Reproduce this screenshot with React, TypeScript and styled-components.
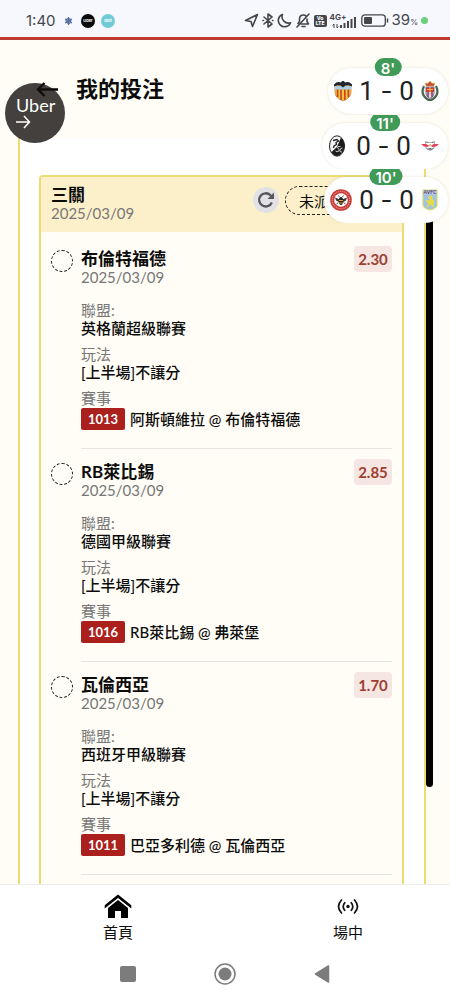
import React from "react";
import styled, { createGlobalStyle } from "styled-components";

const sans = `Lato, "Noto Sans CJK TC", sans-serif`;

const GlobalStyle = createGlobalStyle`
  *, *::before, *::after { box-sizing: border-box; }
  body { margin: 0; background: #fffdf5; font-family: ${sans}; color: #0c0c0c; }
  button { font: inherit; color: inherit; background: none; border: 0; padding: 0; cursor: pointer; }
  h1, h2, h3, p, dl, dt, dd, ul { margin: 0; padding: 0; font-weight: inherit; }
`;

const Screen = styled.div`
  position: relative;
  display: flex;
  flex-direction: column;
  height: 100vh;
  overflow: hidden;
`;

/* ---------- status bar ---------- */

const StatusBar = styled.header`
  display: flex;
  flex: none;
  align-items: center;
  justify-content: space-between;
  height: 40px;
  padding: 4px 22px 0 26px;
  background: #f7f8fd;
  border-bottom: 3px solid #bf3b31;
  color: #45464c;
  font-family: Inter, sans-serif;
`;

const StatusGroup = styled.div<{ $gap: number }>`
  display: flex;
  align-items: center;
  gap: ${(p) => p.$gap}px;
`;

const Clock = styled.time`
  width: 30px;
  font-size: 15px;
  line-height: 20px;
`;

const AppDot = styled.span<{ $color: string }>`
  display: grid;
  place-items: center;
  width: 14px;
  height: 14px;
  border-radius: 50%;
  background: ${(p) => p.$color};
  color: #fff;
  font-size: 4px;
  font-weight: 700;
  line-height: 4px;
`;

const Volte = styled.span`
  display: grid;
  place-items: center;
  width: 13px;
  height: 12px;
  border-radius: 2px;
  background: #45464c;
  color: #fff;
  font-size: 5px;
  font-weight: 800;
  line-height: 5px;
  text-align: center;
`;

const Network = styled.span`
  position: relative;
  width: 28px;
  height: 16px;
`;

const NetworkType = styled.span`
  position: absolute;
  left: 0;
  top: 0;
  font-size: 8px;
  font-weight: 700;
  line-height: 8px;
`;

const Percent = styled.span`
  font-size: 15px;
  line-height: 20px;
  small { font-size: 8px; }
`;

const ActiveDot = styled.span`
  width: 7px;
  height: 7px;
  border-radius: 50%;
  background: #68d07c;
`;

/* ---------- page ---------- */

const TitleBar = styled.div`
  display: flex;
  flex: none;
  align-items: center;
  gap: 16px;
  height: 98px;
  padding: 0 36px;
`;

const BackButton = styled.button`
  display: flex;
  width: 24px;
  height: 24px;
  align-items: center;
`;

const PageTitle = styled.h1`
  font-size: 22px;
  font-weight: 700;
  line-height: 30px;
`;

const Panel = styled.main`
  position: relative;
  display: flex;
  flex: 1;
  min-height: 0;
  margin: 0 24px 0 18px;
  padding: 37px 20px 0 19px;
  background: #fff;
  border: solid #ecdc72;
  border-width: 0 2px;
`;

const ScrollThumb = styled.div`
  position: absolute;
  top: 60px;
  right: -9px;
  bottom: 97px;
  width: 7px;
  border-radius: 4px;
  background: #000;
`;

const Card = styled.section`
  flex: 1;
  overflow: hidden;
  background: #fffdf5;
  border: 2px solid #ecdc72;
  border-bottom: 0;
  border-radius: 4px 4px 0 0;
`;

const CardHead = styled.div`
  display: flex;
  align-items: flex-start;
  padding: 9px 10px 10px;
  background: #fcf0cb;
`;

const CardTitle = styled.div`
  flex: 1;
`;

const Name = styled.h2`
  font-size: 17px;
  font-weight: 700;
  line-height: 18px;
`;

const DateText = styled.p`
  color: #777;
  font-size: 15px;
  line-height: 18px;
`;

const RefreshButton = styled.button`
  display: grid;
  place-items: center;
  flex: none;
  width: 26px;
  height: 26px;
  margin: 1px 6px 0;
  border-radius: 50%;
  background: #e2e1e4;
`;

const StatusPill = styled.button`
  flex: none;
  width: 107px;
  height: 29px;
  padding-left: 13px;
  border: 1px dashed #222;
  border-radius: 15px;
  font-size: 15px;
  line-height: 20px;
  text-align: left;
`;

const BetList = styled.ul`
  padding: 4px 10px 0;
  list-style: none;
`;

const BetItem = styled.li`
  display: flex;
  align-items: flex-start;
  gap: 8px;
`;

const Marker = styled.input`
  appearance: none;
  flex: none;
  width: 22px;
  height: 22px;
  margin: 14px 0 0;
  border: 1px dashed #222;
  border-radius: 50%;
`;

const BetBody = styled.div`
  flex: 1;
  padding: 10px 0 18px;
  border-bottom: 1px solid #e9e3dc;
`;

const BetHead = styled.div`
  display: flex;
  align-items: flex-start;
  justify-content: space-between;
`;

const BetTitle = styled.div`
  padding: 4px 0 0;
`;

const Odds = styled.span`
  width: 38px;
  border-radius: 4px;
  background: #f6e6e1;
  color: #9c4034;
  font-size: 15px;
  font-weight: 700;
  line-height: 26px;
  text-align: center;
`;

const Fields = styled.dl`
  display: grid;
  gap: 8px;
  margin-top: 15px;
  font-size: 15px;
  line-height: 18px;
  dt { color: #777; }
  dd { font-weight: 500; }
`;

const Match = styled.dd`
  display: flex;
  align-items: center;
  gap: 5px;
  padding-top: 1px;
  line-height: 22px;
  white-space: nowrap;
`;

const MatchNo = styled.span`
  width: 44px;
  border-radius: 2px;
  background: #ab1f1c;
  color: #fff;
  font-size: 13px;
  font-weight: 700;
  text-align: center;
`;

/* ---------- bottom bars ---------- */

const TabBar = styled.nav`
  position: relative;
  display: flex;
  flex: none;
  justify-content: space-between;
  height: 66px;
  padding: 8px 86px 0 102px;
  background: #fff;
  border-top: 1px solid #ececec;
`;

const Tab = styled.button`
  display: flex;
  flex-direction: column;
  align-items: center;
  gap: 3px;
  width: 32px;
  font-size: 15px;
  line-height: 20px;
  white-space: nowrap;
`;

const SystemBar = styled.nav`
  display: flex;
  flex: none;
  align-items: center;
  justify-content: center;
  gap: 78px;
  height: 50px;
  padding-bottom: 2px;
  background: #fff;
  button { display: flex; }
`;

/* ---------- floating overlays ---------- */

const Bubble = styled.button`
  position: absolute;
  top: 83px;
  left: 5px;
  width: 60px;
  height: 60px;
  padding: 0 0 2px 11px;
  border-radius: 50%;
  background: rgba(20, 16, 16, 0.8);
  color: #fff;
  font-size: 18px;
  line-height: 20px;
  text-align: left;
  svg { display: block; }
`;

const Scores = styled.aside`
  position: absolute;
  top: 58px;
  right: 0;
  display: flex;
  flex-direction: column;
  align-items: flex-end;
`;

const ScoreWidget = styled.div<{ $width: number; $first?: boolean }>`
  position: relative;
  width: ${(p) => p.$width}px;
  height: ${(p) => (p.$first ? 57 : 54)}px;
  padding-top: ${(p) => (p.$first ? 10 : 8)}px;
  overflow: hidden;
`;

const ScorePill = styled.div`
  display: flex;
  align-items: center;
  justify-content: space-between;
  height: 46px;
  margin: 0 2px;
  padding: 0 9px 0 6px;
  border-radius: 23px;
  background: #fff;
  box-shadow: 0 0 3px rgba(90, 80, 40, 0.16);
`;

const Minute = styled.span<{ $first?: boolean }>`
  position: absolute;
  top: ${(p) => (p.$first ? 0 : -2)}px;
  left: 50%;
  transform: translateX(-50%);
  height: 18px;
  padding: 4px 6px 0;
  border-radius: 9px;
  background: #409a58;
  color: #fff;
  font-family: Inter, sans-serif;
  font-size: 15px;
  font-weight: 600;
  line-height: 14px;
`;

const Result = styled.div`
  display: grid;
  grid-template-columns: repeat(3, 16px);
  gap: 4px;
  color: #222;
  font-family: Roboto, sans-serif;
  font-size: 26px;
  line-height: 26px;
  text-align: center;
  i { font-family: Inter, sans-serif; font-style: normal; }
`;

/* ---------- icons ---------- */

const Valencia = () => (
  <svg width="18" height="22" viewBox="0 0 18 22" aria-label="Valencia">
    <path d="M1 7Q1 5 3 5H15Q17 5 17 7V12Q17 18 9 21Q1 18 1 12Z" fill="#f4c63c" stroke="#c9762c" strokeWidth=".7" />
    <path d="M3.600 9V17M7 9V20M10.800 9V20M14.400 9V17" stroke="#c8452c" strokeWidth="1.700" />
    <path d="M1 6H17V9.500H1Z" fill="#a9cfe4" />
    <path d="M0 4.500Q3 1 7 2.500L8 1H10L11 2.500Q15 1 18 4.500V6.500Q14 4.500 11.500 5.500L9 7.500L6.500 5.500Q4 4.500 0 6.500Z" fill="#20242c" />
  </svg>
);

const Valladolid = () => (
  <svg width="18" height="22" viewBox="0 0 18 22" aria-label="Valladolid">
    <path d="M3 6Q-1 14 6 19Q9 21 12 19Q19 14 15 6" fill="#eef0ea" stroke="#4a6650" strokeWidth="2.200" />
    <path d="M5 7H13V13Q13 17 9 18.500Q5 17 5 13Z" fill="#f0d9dc" stroke="#7a5176" strokeWidth=".8" />
    <path d="M7 7V17M11 7V17" stroke="#6c3f8c" strokeWidth="1.500" />
    <path d="M5 8H13V12H5Z" fill="#cf3a35" />
    <path d="M6 9.500H12M9 8V15" stroke="#e8bb48" />
    <path d="M5 6L4.500 3L7 3.500L9 1L11 3.500L13.500 3L13 6Z" fill="#c6483c" stroke="#d8a03a" strokeWidth=".7" />
  </svg>
);

const Freiburg = () => (
  <svg width="18" height="22" viewBox="0 0 18 22" aria-label="Freiburg">
    <ellipse cx="9" cy="11" rx="7.500" ry="10.200" fill="#f4f4f4" stroke="#222" />
    <path d="M13 2.500Q17 7 16.500 12Q15 20 9 21Q5 20.500 3.500 17L9 12Z" fill="#1c1c1c" />
    <path d="M5 5.500L9 4.500L10.500 6L8 7.500L8.500 9.500L6 11L5.500 13" stroke="#222" strokeWidth="1.300" fill="none" />
    <path d="M12.500 11.500Q9 11 9.500 13Q12 14 11 16Q9 17.500 7.500 16M14.500 13Q12 13 12 15.500Q12 17.500 14 17" stroke="#ddd" strokeWidth=".9" fill="none" />
  </svg>
);

const Leipzig = () => (
  <svg width="18" height="22" viewBox="0 0 18 22" aria-label="Leipzig">
    <path d="M4.500 7.500H13.500L13 13Q9 17.500 5 13Z" fill="#fff" stroke="#8a8e95" strokeWidth=".7" />
    <path d="M4.500 6.500L7 7.500M13.500 6.500L11 7.500M5.500 13Q9 16.500 12.500 13" stroke="#666" strokeWidth=".8" fill="none" />
    <path d="M0 9L5 9L8 10.500L7 12L3 11.500ZM18 9L13 9L10 10.500L11 12L15 11.500Z" fill="#e3415f" />
    <circle cx="9" cy="10" r="1" fill="#e3b448" />
    <path d="M7.500 13.500H10.500" stroke="#444" strokeWidth=".8" />
  </svg>
);

const Brentford = () => (
  <svg width="22" height="22" viewBox="0 0 22 22" aria-label="Brentford">
    <circle cx="11" cy="11" r="10.800" fill="#c93b37" />
    <circle cx="11" cy="11" r="8.700" fill="none" stroke="#e79c94" strokeWidth="1.200" strokeDasharray="1 1" />
    <circle cx="11" cy="11" r="6.800" fill="#fff" />
    <path d="M5 8.500L10 10.500L9 13L6 11.500ZM17 8.500L12 10.500L13 13L16 11.500Z" fill="#3a3632" />
    <ellipse cx="11" cy="12" rx="2.200" ry="4" fill="#262320" />
    <path d="M9 11.500H13M9 14H13" stroke="#dfa632" strokeWidth="1.100" />
    <path d="M9.500 8L8.500 6.500M12.500 8L13.500 6.500M8.500 13.500L6.500 15M13.500 13.500L15.500 15" stroke="#262320" strokeWidth=".8" />
  </svg>
);

const Villa = () => (
  <svg width="18" height="22" viewBox="0 0 18 22" aria-label="Aston Villa">
    <path d="M2 1H16V16Q16 19 9 21Q2 19 2 16Z" fill="#9fc3e4" stroke="#d9d66e" strokeWidth="1.200" />
    <path d="M2.500 1.500H15.500V5.500H2.500Z" fill="#b6cce4" />
    <text x="9" y="5.200" textAnchor="middle" fontFamily="Lato" fontSize="5" fontWeight="700" fill="#5a3f68">AVFC</text>
    <path d="M8 7L11 6.500L12 8.500L11 10L13.500 12L12.500 15L13 18L10.500 17L9 15L7 18.500L5.500 18L7.500 14L5 13L5.500 11L8 11.500L9 10L7 9Z" fill="#e8dc45" />
  </svg>
);

const HomeIcon = () => (
  <svg width="28" height="26" viewBox="0 0 28 26" aria-hidden="true">
    <path d="M14 1.500L27.300 12.300V15.500L14 4.900L.7 15.500V12.300Z" fill="#000" />
    <path d="M14 7L24 15V25H17V18H11V25H4V15Z" fill="#000" />
  </svg>
);

const LiveIcon = () => (
  <svg width="22" height="26" viewBox="0 0 22 26" aria-hidden="true" fill="none" stroke="#111" strokeWidth="1.700" strokeLinecap="round">
    <circle cx="11" cy="13.500" r="1.700" fill="#111" stroke="none" />
    <path d="M7.700 9.700Q4.700 13.500 7.700 17.300M14.300 9.700Q17.300 13.500 14.300 17.300M4.500 7Q-1.500 13.500 4.500 20M17.500 7Q23.500 13.500 17.500 20" />
  </svg>
);

const stroke = { fill: "none", stroke: "#45464c", strokeWidth: 1.6, strokeLinejoin: "round", strokeLinecap: "round" } as const;

const bets = [
  { team: "布倫特福德", odds: "2.30", league: "英格蘭超級聯賽", no: "1013", match: "阿斯頓維拉 @ 布倫特福德" },
  { team: "RB萊比錫", odds: "2.85", league: "德國甲級聯賽", no: "1016", match: "RB萊比錫 @ 弗萊堡" },
  { team: "瓦倫西亞", odds: "1.70", league: "西班牙甲級聯賽", no: "1011", match: "巴亞多利德 @ 瓦倫西亞" },
];

const games = [
  { width: 124, minute: "8'", home: <Valencia />, away: <Valladolid />, score: ["1", "0"] },
  { width: 130, minute: "11'", home: <Freiburg />, away: <Leipzig />, score: ["0", "0"] },
  { width: 128, minute: "10'", home: <Brentford />, away: <Villa />, score: ["0", "0"] },
];

export default function App() {
  return (
    <Screen>
      <GlobalStyle />
      <StatusBar>
        <StatusGroup $gap={6}>
          <Clock>1:40</Clock>
          <svg width="13" height="10" viewBox="0 0 13 10" aria-hidden="true">
            <path d="M6.500 1V9M3 3L10 7M10 3L3 7" stroke="#566d9e" strokeWidth="1.200" />
            <circle cx="6.500" cy="5" r="2.300" fill="none" stroke="#566d9e" strokeWidth="1.200" />
          </svg>
          <AppDot $color="#0a0a0a">Uber</AppDot>
          <AppDot $color="#70cbd6">bolt</AppDot>
        </StatusGroup>
        <StatusGroup $gap={3}>
          <svg width="15" height="15" viewBox="0 0 15 15" {...stroke}><path d="M1.500 7.500L13.500 1.500L8.500 13.500L7 8.500Z" /></svg>
          <svg width="12" height="15" viewBox="0 0 12 15" {...stroke}><path d="M2 4L10 11L6 14V1L10 4L2 11M1 7.500H1.500M10.500 7.500H11" /></svg>
          <svg width="15" height="15" viewBox="0 0 15 15" {...stroke}><path d="M5.500 1.500A6.300 6.300 0 1 0 13.500 9.700A6.300 6.300 0 0 1 5.500 1.500Z" /></svg>
          <svg width="16" height="15" viewBox="0 0 16 15" {...stroke}><path d="M3 10.500L4.500 8.500V5.500Q5 2 8.300 2Q10 2 11 3M12 6V8.500L13.500 11H6M7 13.500H10M14 1L2 14" /></svg>
          <Volte>Vo<br />LTE</Volte>
          <Network>
            <NetworkType>4G+</NetworkType>
            <svg width="28" height="16" viewBox="0 0 28 16" aria-hidden="true">
              <path d="M4 11V15M2.500 12.500L4 11M7 11V15L8.500 13.500" stroke="#45464c" fill="none" />
              <path d="M11 12V15M14.500 10V15M18 8V15M21.500 6V15M25 4V15" stroke="#45464c" strokeWidth="2" />
            </svg>
          </Network>
          <svg width="28" height="13" viewBox="0 0 28 13" aria-hidden="true">
            <rect x=".8" y=".8" width="23.500" height="11.400" rx="3" fill="none" stroke="#45464c" strokeWidth="1.300" />
            <rect x="3" y="3" width="8" height="7" rx="1" fill="#45464c" />
            <path d="M26.500 4.500V8.500" stroke="#45464c" strokeWidth="1.500" />
          </svg>
          <Percent>39<small>%</small></Percent>
          <ActiveDot />
        </StatusGroup>
      </StatusBar>

      <TitleBar>
        <BackButton aria-label="返回">
          <svg width="24" height="18" viewBox="0 0 24 18" fill="none" stroke="#000" strokeWidth="2.400">
            <path d="M22 9.500H1.500M8.500 3L2 9.500L8.500 16" />
          </svg>
        </BackButton>
        <PageTitle>我的投注</PageTitle>
      </TitleBar>

      <Panel>
        <Card>
          <CardHead>
            <CardTitle>
              <Name>三關</Name>
              <DateText>2025/03/09</DateText>
            </CardTitle>
            <RefreshButton aria-label="重新整理">
              <svg width="18" height="18" viewBox="0 0 18 18" fill="none">
                <path d="M14.800 11.500A6.600 6.600 0 1 1 13.500 4.300L15 5.800" stroke="#55565a" strokeWidth="2.300" />
                <path d="M17 1.500V8H10.500Z" fill="#55565a" />
              </svg>
            </RefreshButton>
            <StatusPill>未派彩</StatusPill>
          </CardHead>
          <BetList>
            {bets.map((b) => (
              <BetItem key={b.no}>
                <Marker type="checkbox" aria-label={b.team} />
                <BetBody>
                  <BetHead>
                    <BetTitle>
                      <Name as="h3">{b.team}</Name>
                      <DateText>2025/03/09</DateText>
                    </BetTitle>
                    <Odds>{b.odds}</Odds>
                  </BetHead>
                  <Fields>
                    <div><dt>聯盟:</dt><dd>{b.league}</dd></div>
                    <div><dt>玩法</dt><dd>[上半場]不讓分</dd></div>
                    <div><dt>賽事</dt><Match><MatchNo>{b.no}</MatchNo>{b.match}</Match></div>
                  </Fields>
                </BetBody>
              </BetItem>
            ))}
          </BetList>
        </Card>
        <ScrollThumb />
      </Panel>

      <TabBar>
        <Tab><HomeIcon />首頁</Tab>
        <Tab><LiveIcon />場中</Tab>
      </TabBar>
      <SystemBar>
        <button aria-label="最近使用"><svg width="16" height="16"><rect width="16" height="16" rx="2" fill="#7c7c7c" /></svg></button>
        <button aria-label="主畫面">
          <svg width="22" height="22"><circle cx="11" cy="11" r="10" fill="none" stroke="#7c7c7c" strokeWidth="1.500" /><circle cx="11" cy="11" r="6.500" fill="#7c7c7c" /></svg>
        </button>
        <button aria-label="返回上一頁"><svg width="16" height="20"><path d="M1.500 10L14.500 2V18Z" fill="#7c7c7c" stroke="#7c7c7c" strokeWidth="1.500" strokeLinejoin="round" /></svg></button>
      </SystemBar>

      <Bubble>
        Uber
        <svg width="15" height="14" viewBox="0 0 15 14" fill="none" stroke="#fff" strokeWidth="1.500"><path d="M0 7H13.500M8 1L13.500 7L8 13" /></svg>
      </Bubble>

      <Scores>
        {games.map((g, i) => (
          <ScoreWidget key={g.minute} $width={g.width} $first={i === 0}>
            <ScorePill>
              {g.home}
              <Result><span>{g.score[0]}</span><i>-</i><span>{g.score[1]}</span></Result>
              {g.away}
            </ScorePill>
            <Minute $first={i === 0}>{g.minute}</Minute>
          </ScoreWidget>
        ))}
      </Scores>
    </Screen>
  );
}
